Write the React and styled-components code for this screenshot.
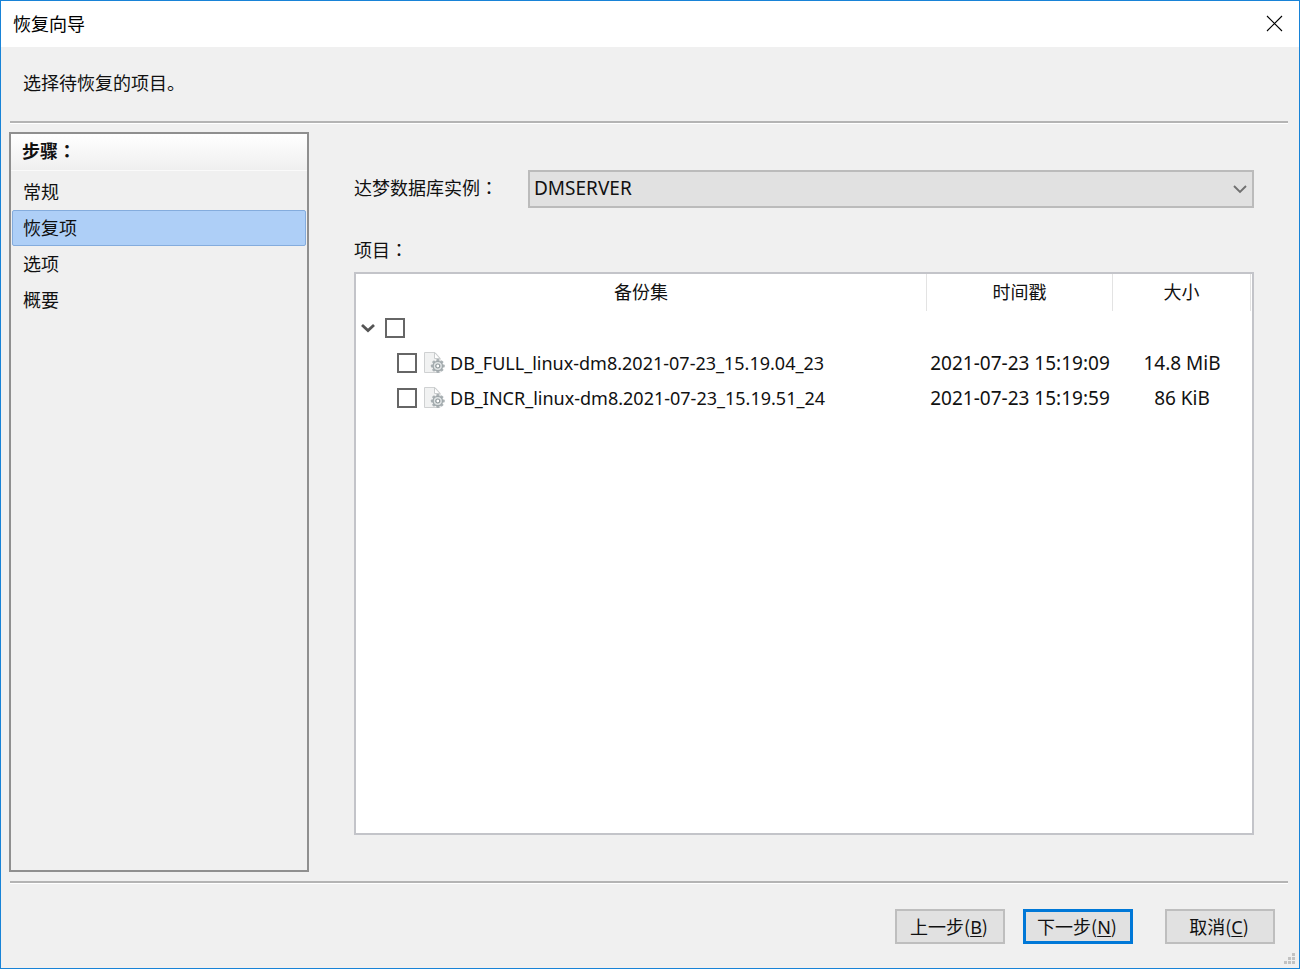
import React, { useState } from "react";
import styled, { createGlobalStyle, css } from "styled-components";

const GlobalStyle = createGlobalStyle`
  *, *::before, *::after { box-sizing: border-box; }
  body {
    margin: 0;
    background: #f0f0f0;
    color: #111;
    font-family: "Noto Sans", "Noto Sans CJK SC", sans-serif;
    font-size: 18px;
    line-height: 24px;
  }
  button, select, input { font: inherit; color: inherit; margin: 0; }
`;

const cjkFont = css`font-family: "Noto Sans CJK SC", "Noto Sans", sans-serif;`;

const Dialog = styled.div`
  position: relative;
  display: flex;
  flex-direction: column;
  min-height: 100vh;
  border: 1px solid #1883d7;
  background: #f0f0f0;
  ${cjkFont}
`;

const TitleBar = styled.header`
  display: flex;
  align-items: center;
  justify-content: space-between;
  height: 46px;
  padding: 0 16px 2px 12px;
  background: #fff;
  color: #000;
`;

const Title = styled.h1`
  margin: 0;
  font-size: 18px;
  font-weight: 400;
`;

const CloseButton = styled.button`
  display: flex;
  padding: 0;
  border: 0;
  background: none;
`;

const Description = styled.p`
  display: flex;
  align-items: center;
  height: 74px;
  margin: 0;
  padding: 0 22px 4px;
`;

const Divider = styled.hr`
  width: auto;
  height: 3px;
  margin: 0 11px 0 9px;
  border: 0;
  border-top: 2px solid #b4b4b4;
  border-bottom: 1px solid #fff;
`;

const Body = styled.div`
  display: flex;
  flex: 1;
  gap: 45px;
  padding: 8px 45px 9px 8px;
`;

const StepsPanel = styled.nav`
  width: 300px;
  flex: none;
  border: 2px solid #8f8f8f;
`;

const StepsTitle = styled.h2`
  margin: 0;
  padding: 4px 11px 8px;
  border-bottom: 1px solid #fafafa;
  background: linear-gradient(#fff, #efefef);
  font-size: 18px;
  line-height: 24px;
  font-weight: 700;
`;

const StepList = styled.ol`
  list-style: none;
  margin: 0;
  padding: 3px 1px;
`;

const StepButton = styled.button`
  display: block;
  width: 100%;
  height: 36px;
  padding: 0 10px 2px;
  text-align: left;
  border: 1px solid ${(p) => (p.$active ? "#84acdd" : "transparent")};
  border-radius: 2px;
  background: ${(p) => (p.$active ? "#aecff7" : "none")};
`;

const Content = styled.main`
  display: flex;
  flex: 1;
  flex-direction: column;
  min-width: 0;
  padding: 38px 0 37px;
`;

const InstanceRow = styled.div`
  display: grid;
  grid-template-columns: 174px 1fr;
  align-items: center;
`;

const FieldLabel = styled.label`
  padding-bottom: 4px;
`;

const SelectBox = styled.div`
  display: grid;
  align-items: center;
  > * { grid-area: 1 / 1; }
  > svg { justify-self: end; margin-right: 6px; pointer-events: none; }
`;

const Select = styled.select`
  appearance: none;
  width: 100%;
  height: 38px;
  padding: 0 4px 2px;
  border: 2px solid #bbb;
  border-radius: 0;
  background: #e1e1e1;
  font-family: "Noto Sans", sans-serif;
  font-size: 19px;
`;

const ItemsLabel = styled.h2`
  margin: 29px 0 11px;
  font-size: 18px;
  line-height: 24px;
  font-weight: 400;
`;

const Centered = styled.span`
  font-family: "Noto Sans CJK TC", sans-serif;
`;

const TreeFrame = styled.div`
  flex: 1;
  padding-right: 1px;
  border: 2px solid #c3c4c9;
  background: #fff;
`;

const TreeTable = styled.table`
  width: 100%;
  table-layout: fixed;
  border-collapse: separate;
  border-spacing: 0;
`;

const HeadCell = styled.th`
  width: ${(p) => p.$width || "auto"};
  height: 37px;
  padding: 0 0 3px;
  border-right: 1px solid #e3e3e3;
  font-weight: 400;
`;

const Cell = styled.td`
  height: 35px;
  padding: 0 0 2px;
  text-align: ${(p) => p.$align || "center"};
  font-family: "Noto Sans", sans-serif;
  font-size: 19px;
  white-space: nowrap;
`;

const TreeItem = styled.div`
  display: flex;
  align-items: center;
  padding-left: ${(p) => (p.$level ? 41 : 4)}px;
`;

const ItemLabel = styled.label`
  display: flex;
  align-items: center;
  gap: 5px;
  margin-left: 6px;
  font-size: 18px;
`;

const Expander = styled.button`
  display: flex;
  margin-right: 9px;
  padding: 0;
  border: 0;
  background: none;
`;

const CheckBox = styled.input`
  appearance: none;
  flex: none;
  width: 20px;
  height: 20px;
  border: 2px solid #666;
  background: #fff;
  &:checked { background: #555; box-shadow: inset 0 0 0 3px #fff; }
`;

const Footer = styled.footer`
  display: flex;
  justify-content: flex-end;
  padding: 25px 24px 24px;
`;

const ActionButton = styled.button`
  width: 110px;
  height: 35px;
  margin-left: ${(p) => p.$gap || 0}px;
  padding: 0 2px 0 0;
  border: ${(p) => (p.$primary ? "3px solid #0078d7" : "2px solid #bebebe")};
  background: #e1e1e1;
`;

const Key = styled.u`
  font-family: "Noto Sans", sans-serif;
  text-underline-offset: 2px;
`;

const Grip = styled.svg`
  position: absolute;
  right: 4px;
  bottom: 3px;
`;

function WideColon() {
  return <Centered lang="zh-TW">：</Centered>;
}

function CloseIcon() {
  return (
    <svg width="17" height="17" viewBox="0 0 17 17" stroke="#000" strokeWidth="1.1" aria-hidden="true">
      <path d="M1 1 16 16M16 1 1 16" />
    </svg>
  );
}

function Chevron({ bold }) {
  return (
    <svg width="16" height="12" viewBox="0 0 16 12" fill="none" stroke={bold ? "#555" : "#707070"} strokeWidth={bold ? 2.8 : 1.9} aria-hidden="true">
      <path d={bold ? "M2 3 8 8.500 14 3" : "M2 3 8 9 14 3"} />
    </svg>
  );
}

const teeth = [0, 45, 90, 135, 180, 225, 270, 315];

function BackupIcon() {
  return (
    <svg width="22" height="22" viewBox="0 0 22 22" aria-hidden="true">
      <path d="M1.500 0.500H12L17 6V20.500H1.500Z" fill="#f1f2f2" stroke="#cfd1d2" />
      <path d="M11.500 0.500V6.500H17Z" fill="#fff" stroke="#c9cccd" />
      <g transform="translate(14.800 14)">
        {teeth.map((a) => (
          <rect key={a} x="-1.500" y="-6.900" width="3" height="3" rx="0.800" fill="#aab1b4" transform={`rotate(${a})`} />
        ))}
        <circle r="4.700" fill="#dfe3e4" stroke="#a0a8ab" strokeWidth="1.300" />
        <circle r="2" fill="#fff" stroke="#8f989b" strokeWidth="1.200" />
      </g>
    </svg>
  );
}

function GripDots() {
  const dots = [[9, 0], [5, 4], [9, 4], [1, 8], [5, 8], [9, 8]];
  return (
    <Grip width="12" height="12" fill="#c2c2c2" aria-hidden="true">
      {dots.map(([x, y]) => <rect key={`${x}-${y}`} x={x} y={y} width="3" height="3" />)}
    </Grip>
  );
}

const steps = ["常规", "恢复项", "选项", "概要"];

const backups = [
  { name: "DB_FULL_linux-dm8.2021-07-23_15.19.04_23", time: "2021-07-23 15:19:09", size: "14.8 MiB" },
  { name: "DB_INCR_linux-dm8.2021-07-23_15.19.51_24", time: "2021-07-23 15:19:59", size: "86 KiB" },
];

export default function App() {
  const [step, setStep] = useState(1);
  const [open, setOpen] = useState(true);

  return (
    <>
      <GlobalStyle />
      <Dialog role="dialog" aria-labelledby="wizard-title" lang="zh-CN">
        <TitleBar>
          <Title id="wizard-title">恢复向导</Title>
          <CloseButton type="button" aria-label="关闭"><CloseIcon /></CloseButton>
        </TitleBar>
        <Description>选择待恢复的项目。</Description>
        <Divider />
        <Body>
          <StepsPanel>
            <StepsTitle>步骤<WideColon /></StepsTitle>
            <StepList>
              {steps.map((name, i) => (
                <li key={name}>
                  <StepButton type="button" $active={i === step} onClick={() => setStep(i)}>{name}</StepButton>
                </li>
              ))}
            </StepList>
          </StepsPanel>
          <Content>
            <InstanceRow>
              <FieldLabel htmlFor="instance">达梦数据库实例<WideColon /></FieldLabel>
              <SelectBox>
                <Select id="instance" defaultValue="DMSERVER">
                  <option>DMSERVER</option>
                </Select>
                <Chevron />
              </SelectBox>
            </InstanceRow>
            <ItemsLabel id="items-label">项目<WideColon /></ItemsLabel>
            <TreeFrame>
              <TreeTable aria-labelledby="items-label">
                <thead>
                  <tr>
                    <HeadCell>备份集</HeadCell>
                    <HeadCell $width="186px">时间戳</HeadCell>
                    <HeadCell $width="138px">大小</HeadCell>
                  </tr>
                </thead>
                <tbody>
                  <tr>
                    <Cell $align="left">
                      <TreeItem>
                        <Expander type="button" aria-label="展开" aria-expanded={open} onClick={() => setOpen(!open)}>
                          <Chevron bold />
                        </Expander>
                        <CheckBox type="checkbox" aria-label="全部备份集" />
                      </TreeItem>
                    </Cell>
                    <Cell />
                    <Cell />
                  </tr>
                  {open && backups.map((b, i) => (
                    <tr key={b.name}>
                      <Cell $align="left">
                        <TreeItem $level={1}>
                          <CheckBox type="checkbox" id={`backup-${i}`} />
                          <ItemLabel htmlFor={`backup-${i}`}><BackupIcon />{b.name}</ItemLabel>
                        </TreeItem>
                      </Cell>
                      <Cell>{b.time}</Cell>
                      <Cell>{b.size}</Cell>
                    </tr>
                  ))}
                </tbody>
              </TreeTable>
            </TreeFrame>
          </Content>
        </Body>
        <Divider />
        <Footer>
          <ActionButton type="button">上一步(<Key>B</Key>)</ActionButton>
          <ActionButton type="button" $primary $gap={18}>下一步(<Key>N</Key>)</ActionButton>
          <ActionButton type="button" $gap={32}>取消(<Key>C</Key>)</ActionButton>
        </Footer>
        <GripDots />
      </Dialog>
    </>
  );
}
